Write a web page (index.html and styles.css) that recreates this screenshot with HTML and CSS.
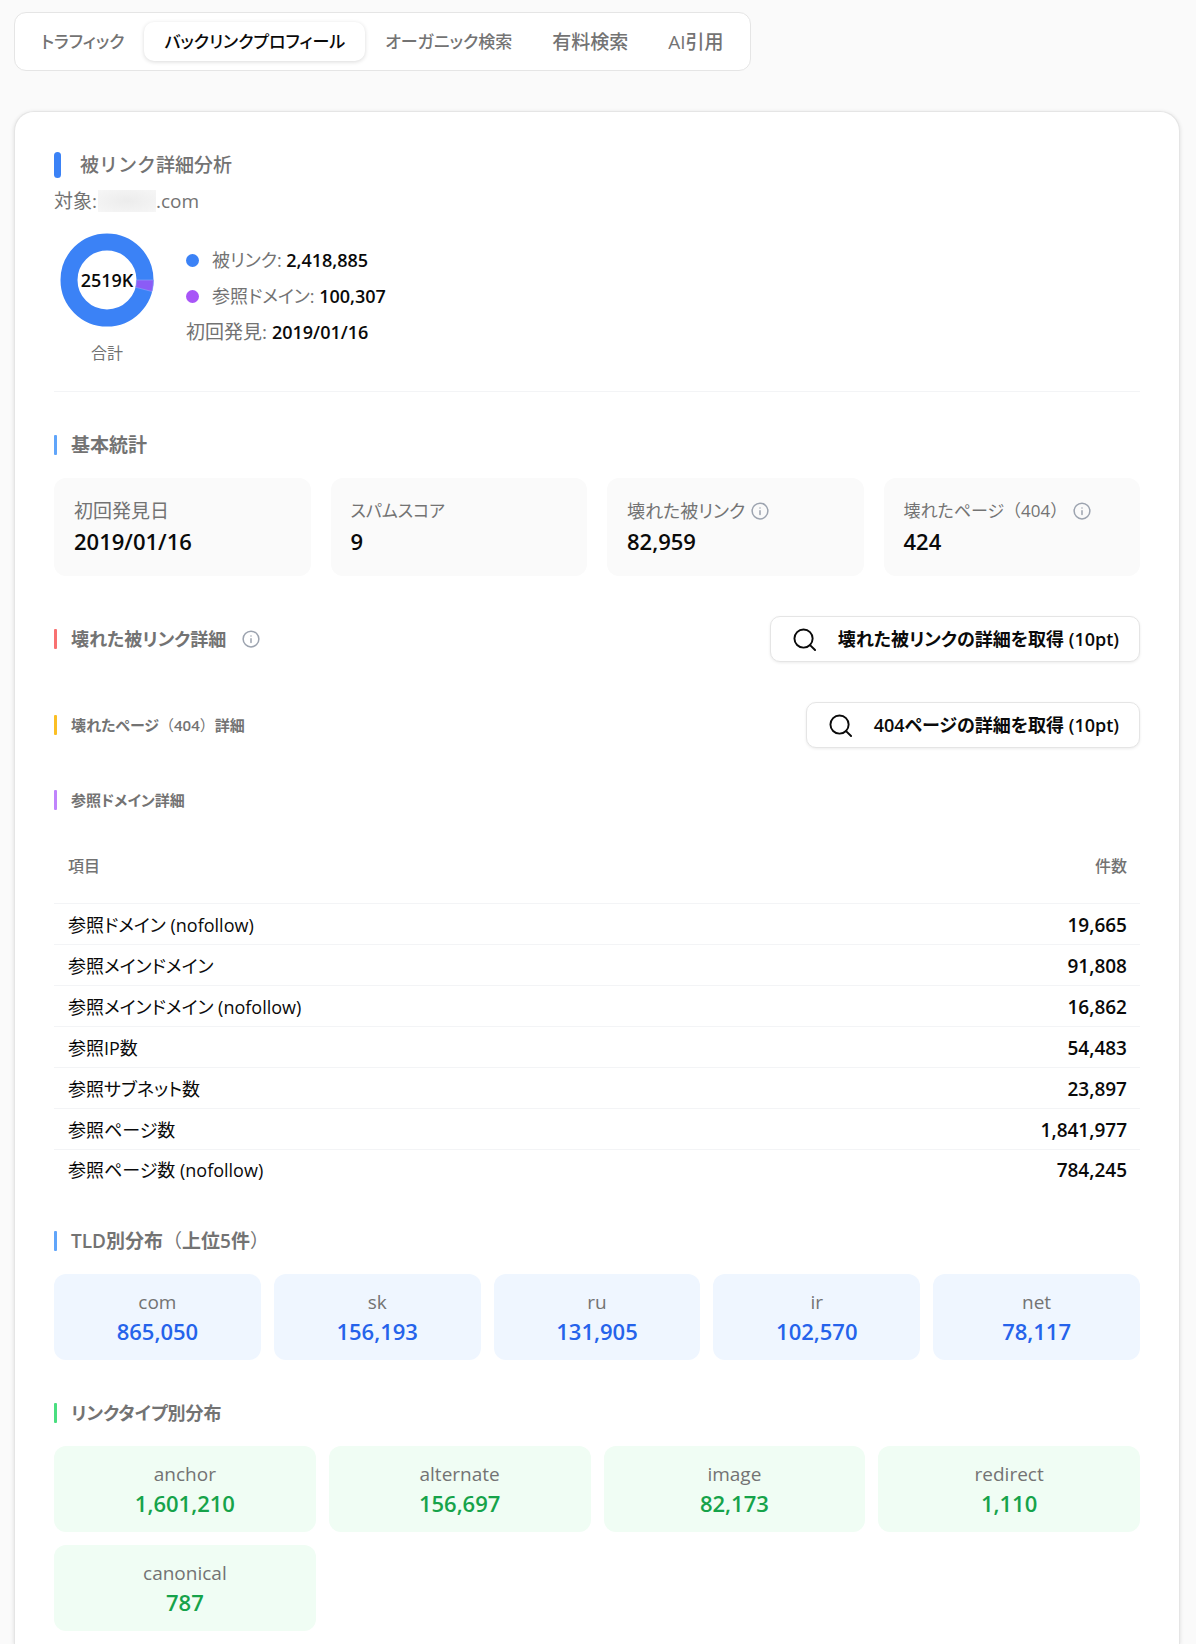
FILE: index.html
```html
<!DOCTYPE html>
<html lang="ja">
<head>
<meta charset="utf-8">
<meta name="viewport" content="width=device-width, initial-scale=1">
<title>被リンク詳細分析</title>
<link rel="stylesheet" href="styles.css">
</head>
<body>
<svg class="sprite" aria-hidden="true">
  <symbol id="icon-info" viewBox="0 0 24 24"><circle cx="12" cy="12" r="10.5"/><path d="M12 16.5v-5M12 8h.01"/></symbol>
  <symbol id="icon-search" viewBox="0 0 24 24"><circle cx="11" cy="11" r="9.5"/><path d="m23 23-5.2-5.2"/></symbol>
</svg>
<nav class="tabs" role="tablist">
  <button class="tab kana" type="button" role="tab">トラフィック</button>
  <button class="tab tab-active kana" type="button" role="tab" aria-selected="true">バックリンクプロフィール</button>
  <button class="tab kana" type="button" role="tab">オーガニック検索</button>
  <button class="tab" type="button" role="tab">有料検索</button>
  <button class="tab" type="button" role="tab">AI引用</button>
</nav>
<main class="panel">
  <header class="summary">
    <h1 class="title">被リンク詳細分析</h1>
    <p class="target">対象:<span class="redacted"></span>.com</p>
    <div class="overview">
      <figure class="donut">
        <svg class="donut-chart" viewBox="0 0 98 98" role="img" aria-label="2519K">
          <circle cx="49" cy="49" r="38" fill="none" stroke="#3b82f6" stroke-width="17"/>
          <path d="M78.500 49H95.500A46.500 46.500 0 0 1 94 60.500L77.600 56.300A29.500 29.500 0 0 0 78.500 49Z" fill="#8b5cf6" stroke="#8fa8fa" stroke-width="0.600"/>
          <text class="donut-value" x="49" y="56" text-anchor="middle">2519K</text>
        </svg>
        <figcaption class="donut-caption">合計</figcaption>
      </figure>
      <ul class="legend">
        <li class="legend-item"><span class="dot dot-blue"></span><span>被リンク: <strong>2,418,885</strong></span></li>
        <li class="legend-item"><span class="dot dot-purple"></span><span>参照ドメイン: <strong>100,307</strong></span></li>
        <li class="legend-item legend-date"><span>初回発見: <strong>2019/01/16</strong></span></li>
      </ul>
    </div>
  </header>

  <section>
    <h2 class="heading bar-blue">基本統計</h2>
    <dl class="stats">
      <div class="stat"><dt>初回発見日</dt><dd>2019/01/16</dd></div>
      <div class="stat"><dt class="kana">スパムスコア</dt><dd>9</dd></div>
      <div class="stat"><dt class="mixed">壊れた被リンク<svg class="info"><use href="#icon-info"/></svg></dt><dd>82,959</dd></div>
      <div class="stat"><dt class="kana">壊れたページ<span class="full">（</span>404<span class="full">）</span><svg class="info"><use href="#icon-info"/></svg></dt><dd>424</dd></div>
    </dl>
  </section>

  <section class="action-row">
    <h2 class="heading mixed bar-red">壊れた被リンク詳細<svg class="info info-heading"><use href="#icon-info"/></svg></h2>
    <button class="fetch" type="button"><svg class="search"><use href="#icon-search"/></svg>壊れた被リンクの詳細を取得 (10pt)</button>
  </section>

  <section class="action-row">
    <h2 class="heading heading-small bar-amber">壊れたページ<span class="full">（</span>404<span class="full">）</span>詳細</h2>
    <button class="fetch" type="button"><svg class="search"><use href="#icon-search"/></svg>404ページの詳細を取得 (10pt)</button>
  </section>

  <section>
    <h2 class="heading heading-small bar-purple">参照ドメイン詳細</h2>
    <table class="domains">
      <thead><tr><th scope="col">項目</th><th scope="col">件数</th></tr></thead>
      <tbody>
        <tr><td>参照ドメイン (nofollow)</td><td>19,665</td></tr>
        <tr><td>参照メインドメイン</td><td>91,808</td></tr>
        <tr><td>参照メインドメイン (nofollow)</td><td>16,862</td></tr>
        <tr><td>参照IP数</td><td>54,483</td></tr>
        <tr><td>参照サブネット数</td><td>23,897</td></tr>
        <tr><td>参照ページ数</td><td>1,841,977</td></tr>
        <tr><td>参照ページ数 (nofollow)</td><td>784,245</td></tr>
      </tbody>
    </table>
  </section>

  <section>
    <h2 class="heading bar-blue">TLD別分布<span class="full">（</span>上位5件<span class="full">）</span></h2>
    <dl class="tiles tiles-blue">
      <div class="tile"><dt>com</dt><dd>865,050</dd></div>
      <div class="tile"><dt>sk</dt><dd>156,193</dd></div>
      <div class="tile"><dt>ru</dt><dd>131,905</dd></div>
      <div class="tile"><dt>ir</dt><dd>102,570</dd></div>
      <div class="tile"><dt>net</dt><dd>78,117</dd></div>
    </dl>
  </section>

  <section>
    <h2 class="heading mixed bar-green">リンクタイプ別分布</h2>
    <dl class="tiles tiles-green">
      <div class="tile"><dt>anchor</dt><dd>1,601,210</dd></div>
      <div class="tile"><dt>alternate</dt><dd>156,697</dd></div>
      <div class="tile"><dt>image</dt><dd>82,173</dd></div>
      <div class="tile"><dt>redirect</dt><dd>1,110</dd></div>
      <div class="tile"><dt>canonical</dt><dd>787</dd></div>
    </dl>
  </section>
</main>
</body>
</html>
```
FILE: styles.css
```css
* { box-sizing: border-box; }

body {
  margin: 0;
  padding: 12px 16px 0 14px;
  min-height: 100vh;
  display: flex;
  flex-direction: column;
  align-items: flex-start;
  gap: 40px;
  background: #fafafa;
  color: #0a0a0a;
  font-family: "Open Sans", "Noto Sans CJK JP", sans-serif;
  font-size: 19px;
  line-height: 26px;
  font-feature-settings: "palt";
}

h1, h2, p, dl, dd, ul, figure { margin: 0; padding: 0; }
ul { list-style: none; }
button { font: inherit; font-feature-settings: inherit; color: inherit; cursor: pointer; white-space: nowrap; }
strong { font-weight: 600; font-size: 18px; color: #0a0a0a; }
svg { flex: none; }
.sprite { position: absolute; width: 0; height: 0; }

/* Tabs */
.tabs {
  display: flex;
  padding: 9px 6px;
  background: #fff;
  border: 1px solid #e5e5e5;
  border-radius: 12px;
}
.tab {
  height: 39px;
  padding: 0 20px;
  border: 0;
  border-radius: 10px;
  background: transparent;
  color: #737373;
  font-weight: 500;
}
.tab-active {
  background: #fff;
  color: #0a0a0a;
  box-shadow: 0 1px 4px rgba(0, 0, 0, 0.15);
}

/* Panel */
.panel {
  flex: 1;
  align-self: stretch;
  display: flex;
  flex-direction: column;
  gap: 40px;
  padding: 39px 39px 12px;
  background: #fff;
  border: 1px solid #e5e5e5;
  border-bottom: 0;
  border-radius: 20px 20px 0 0;
  box-shadow: 0 1px 4px rgba(0, 0, 0, 0.12);
}

/* Summary */
.summary { padding-bottom: 26px; border-bottom: 1px solid #f3f4f6; color: #737373; }
.title {
  display: flex;
  align-items: center;
  gap: 19px;
  font-size: 19px;
  line-height: 28px;
  font-weight: 500;
  font-feature-settings: normal;
}
.title::before { content: ""; width: 7px; height: 26px; border-radius: 4px; background: #3b82f6; }
.target { display: flex; align-items: center; margin-top: 8px; line-height: 28px; }
.redacted { width: 58px; height: 22px; margin-left: 1px; background: radial-gradient(#ececec, #f6f6f6); }
.overview { display: flex; align-items: flex-start; gap: 26px; margin-top: 16px; }
.donut { width: 106px; display: flex; flex-direction: column; align-items: center; gap: 12px; }
.donut-chart { width: 98px; height: 98px; }
.donut-value { font-size: 18px; font-weight: 600; fill: #0a0a0a; }
.donut-caption { font-size: 16px; line-height: 24px; }
.legend { display: flex; flex-direction: column; gap: 10px; padding-top: 16px; font-size: 18px; }
.legend-item { display: flex; align-items: center; gap: 13px; }
.legend-date { font-size: 19px; }
.dot { width: 13px; height: 13px; border-radius: 50%; }
.dot-blue { background: #3b82f6; }
.dot-purple { background: #a855f7; }

/* Section headings */
.heading {
  display: flex;
  align-items: center;
  color: #737373;
  font-size: 19px;
  line-height: 26px;
  font-weight: 600;
}
.heading::before { content: ""; width: 3px; height: 20px; margin-right: 14px; border-radius: 1px; background: currentColor; }
.heading-small { font-size: 15px; line-height: 24px; }
.bar-blue::before { background: #60a5fa; }
.bar-red::before { background: #f87171; }
.bar-amber::before { background: #fbbf24; }
.bar-purple::before { background: #c084fc; }
.bar-green::before { background: #4ade80; }

.mixed { font-size: 18px; }
.kana { font-size: 17px; }
/* Full-width brackets */
.full { font-feature-settings: normal; font-weight: 400; }

.info { width: 18px; height: 18px; margin-left: 6px; fill: none; stroke: #9ca3af; stroke-width: 2; stroke-linecap: round; }
.info-heading { margin-left: 16px; }

/* Basic statistics */
.stats { display: grid; grid-template-columns: repeat(4, 1fr); gap: 20px; margin-top: 20px; }
.stat { padding: 20px; border-radius: 12px; background: #fafafa; }
.stat dt { display: flex; align-items: center; color: #737373; white-space: nowrap; }
.stat dd { margin-top: 2px; font-size: 22px; line-height: 30px; font-weight: 600; }

/* Heading with fetch button */
.action-row { display: flex; align-items: center; justify-content: space-between; }
.fetch {
  display: flex;
  align-items: center;
  gap: 22px;
  height: 46px;
  padding: 0 20px 0 22px;
  border: 1px solid #e5e5e5;
  border-radius: 10px;
  background: #fff;
  box-shadow: 0 1px 3px rgba(0, 0, 0, 0.08);
  font-size: 18px;
  font-weight: 600;
}
.search { width: 23px; height: 23px; fill: none; stroke: currentColor; stroke-width: 2; stroke-linecap: round; }

/* Referring domains */
.domains { width: 100%; margin-top: 16px; border-collapse: separate; border-spacing: 0; }
.domains th, .domains td { height: 41px; padding: 0 14px; text-align: left; border-bottom: 1px solid #f3f4f6; }
.domains td { padding-top: 2px; font-size: 18px; }
.domains th { height: 76px; font-size: 16px; font-weight: 500; color: #737373; }
.domains th:last-child, .domains td:last-child { text-align: right; padding-right: 13px; }
.domains td:last-child { font-size: 19px; font-weight: 600; }
.domains tr:last-child td { height: 38px; border-bottom: 0; }

/* Distribution tiles */
.tiles { display: grid; gap: 13px; margin-top: 20px; text-align: center; }
.tile { padding: 14px; border-radius: 12px; }
.tile dt { line-height: 28px; color: #737373; }
.tile dd { font-size: 22px; line-height: 30px; font-weight: 600; }
.tiles-blue { grid-template-columns: repeat(5, 1fr); }
.tiles-blue .tile { background: #eff6ff; }
.tiles-blue dd { color: #2563eb; }
.tiles-green { grid-template-columns: repeat(4, 1fr); }
.tiles-green .tile { background: #f0fdf4; }
.tiles-green dd { color: #16a34a; }
```
